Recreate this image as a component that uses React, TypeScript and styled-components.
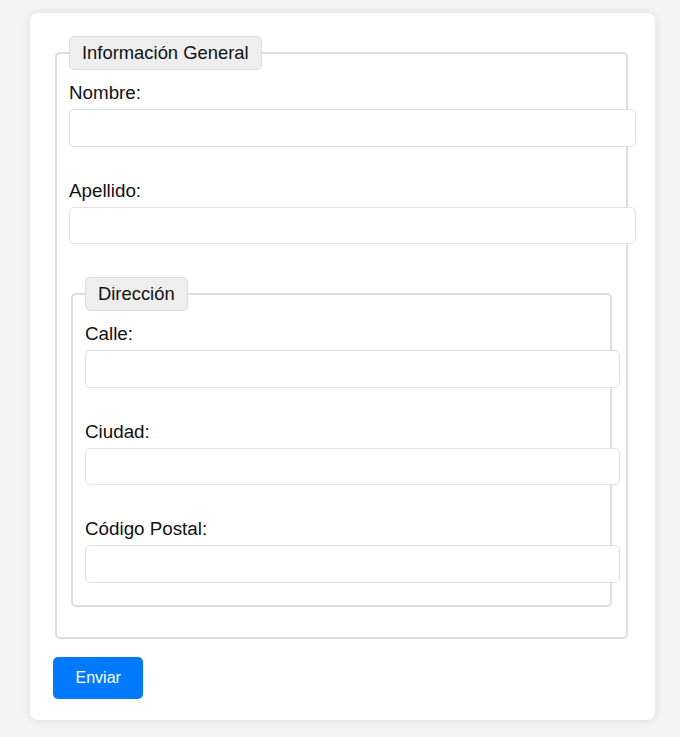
import React from "react";
import styled, { createGlobalStyle } from "styled-components";

const GlobalStyle = createGlobalStyle`
  html, body {
    margin: 0;
    padding: 0;
    background: #f4f4f4;
    font-family: "Liberation Sans", Arial, Helvetica, sans-serif;
  }
`;

const Page = styled.div`
  padding: 13px 25px 17px 30px;
`;

const Card = styled.form`
  width: 625px;
  box-sizing: border-box;
  background: #fff;
  border-radius: 8px;
  box-shadow: 0 0 10px rgba(0, 0, 0, 0.1);
  padding: 23px 25px 21px 23px;
`;

const Fieldset = styled.fieldset<{ $pb: number; $mb: number }>`
  border: 2px solid #ddd;
  border-radius: 5px;
  margin: 0 2px ${(p) => p.$mb}px;
  padding: 12px 12px ${(p) => p.$pb}px;
  min-width: 0;
`;

const Legend = styled.legend`
  font-size: 18.4px;
  line-height: 22px;
  color: #111;
  background: #eee;
  border: 1px solid #ddd;
  border-radius: 5px;
  padding: 5px 12px;
`;

const Stack = styled.div`
  display: flex;
  flex-direction: column;
  gap: 33px;
`;

const Group = styled.div`
  display: flex;
  flex-direction: column;
`;

const Label = styled.label`
  display: block;
  font-size: 18.8px;
  line-height: 22px;
  color: #111;
  margin-bottom: 5px;
`;

const Input = styled.input`
  box-sizing: content-box;
  width: 100%;
  height: 15.5px;
  padding: 10px;
  margin: 0;
  border: 1px solid #e2e2e2;
  border-radius: 5px;
  font-family: inherit;
  font-size: 13.33px;
  background: #fff;
  outline: none;
`;

const Button = styled.button`
  align-self: flex-start;
  background: #007bff;
  color: #fff;
  border: none;
  border-radius: 5px;
  padding: 12px 22.5px;
  font-family: inherit;
  font-size: 16px;
  line-height: 18px;
  cursor: pointer;
`;

const Field = ({ id, label }: { id: string; label: string }) => (
  <Group>
    <Label htmlFor={id}>{label}</Label>
    <Input id={id} type="text" />
  </Group>
);

export default function App() {
  return (
    <>
      <GlobalStyle />
      <Page>
        <Card onSubmit={(e) => e.preventDefault()}>
          <Fieldset $pb={30} $mb={18}>
            <Legend>Información General</Legend>
            <Stack>
              <Field id="nombre" label="Nombre:" />
              <Field id="apellido" label="Apellido:" />
              <Fieldset $pb={22} $mb={0}>
                <Legend>Dirección</Legend>
                <Stack>
                  <Field id="calle" label="Calle:" />
                  <Field id="ciudad" label="Ciudad:" />
                  <Field id="cp" label="Código Postal:" />
                </Stack>
              </Fieldset>
            </Stack>
          </Fieldset>
          <Button type="submit">Enviar</Button>
        </Card>
      </Page>
    </>
  );
}
